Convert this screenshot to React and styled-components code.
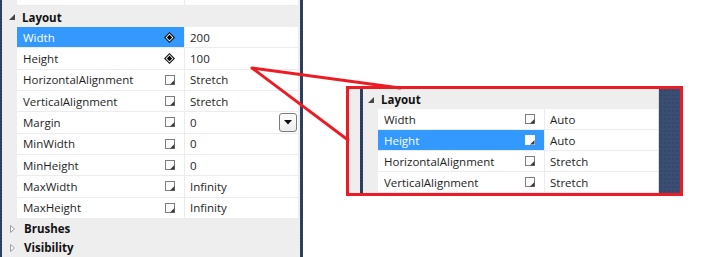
import React from 'react';
import styled, { createGlobalStyle } from 'styled-components';

const Global = createGlobalStyle`
  html, body { margin: 0; padding: 0; background: #ffffff; }
  body { font-family: "Open Sans", "Noto Sans", sans-serif; font-size: 11.5px; color: #1e1e1e; }
`;

const Page = styled.div`
  position: relative;
  width: 710px;
  height: 257px;
  overflow: hidden;
  display: flex;
  background: #ffffff;
`;

const LeftPanel = styled.div`
  display: flex;
  width: 303px;
  height: 100%;
  flex-shrink: 0;
`;

const NavyStrip = styled.div`
  width: ${p => p.$w}px;
  flex-shrink: 0;
  background-color: #2f4162;
  background-image: radial-gradient(#26344f 0.6px, transparent 0.8px);
  background-size: 3px 3px;
`;

const NavyPattern = styled.div`
  width: ${p => p.$w}px;
  flex-shrink: 0;
  background-color: #3a4e73;
  background-image: radial-gradient(#2f4060 0.6px, transparent 0.8px);
  background-size: 4px 4px;
`;

const SideGray = styled.div`
  width: ${p => p.$w}px;
  flex-shrink: 0;
  background: ${p => p.$c || '#eeeeee'};
`;

const Grid = styled.div`
  flex: 1;
  min-width: 0;
  background: #eeeeee;
  overflow: hidden;
  display: flex;
  flex-direction: column;
`;

const Scroller = styled.div`
  display: flex;
  flex-direction: column;
  margin-top: ${p => p.$offset || 0}px;
`;

const Header = styled.div`
  display: flex;
  align-items: center;
  height: ${p => p.$h}px;
  flex-shrink: 0;
  padding-left: ${p => p.$pad}px;
  padding-top: 1px;
  font-weight: 700;
  color: #111111;
  box-sizing: border-box;
`;

const Arrow = styled.svg`
  width: 6px;
  height: ${p => p.$ht || 6}px;
  margin-right: ${p => p.$gap}px;
  flex-shrink: 0;
`;

const Row = styled.div`
  display: grid;
  grid-template-columns: ${p => p.$nameW}px 1fr;
  height: ${p => p.$h}px;
  flex-shrink: 0;
  margin-left: 15px;
  margin-right: ${p => p.$mr}px;
  background: #ffffff;
  border-bottom: 1px solid #ececec;
  box-sizing: border-box;
`;

const NameCell = styled.div`
  display: flex;
  align-items: center;
  padding-left: ${p => p.$pl}px;
  padding-right: 9px;
  background: ${p => (p.$sel ? '#3399ff' : 'transparent')};
  color: ${p => (p.$sel ? '#ffffff' : '#1e1e1e')};
  border-right: 1px solid #ececec;
  min-width: 0;
`;

const Label = styled.span`
  flex: 1;
  white-space: nowrap;
  overflow: hidden;
`;

const ValueCell = styled.div`
  display: flex;
  align-items: center;
  padding-left: ${p => p.$pl}px;
  padding-right: 1px;
  color: #1e1e1e;
  min-width: 0;
`;

const Value = styled.span`
  flex: 1;
  white-space: nowrap;
`;

const DropButton = styled.div`
  width: 18px;
  height: 19px;
  box-sizing: border-box;
  border: 1px solid #7a7a7a;
  border-radius: 3px;
  background: linear-gradient(#ffffff, #ececec);
  display: flex;
  align-items: center;
  justify-content: center;
`;

const RightArea = styled.div`
  flex: 1;
  padding: 86px 0 0 43px;
`;

const Zoomed = styled.div`
  width: 337px;
  height: 110px;
  box-sizing: border-box;
  border: 3px solid #ed1c24;
  display: flex;
`;

const Overlay = styled.svg`
  position: absolute;
  left: 0;
  top: 0;
  pointer-events: none;
`;

const LocalIcon = ({ sel }) => (
  <svg width="10" height="10" viewBox="0 0 10 10">
    <rect x="0.5" y="0.5" width="9" height="9" fill={sel ? '#ffffff' : '#fafafa'} stroke={sel ? '#ffffff' : '#7d7d7d'} />
    <path d="M5 9.5 L9.5 5 L9.5 9.5 Z" fill="#3a3a3a" />
  </svg>
);

const SetIcon = () => (
  <svg width="11" height="11" viewBox="0 0 11 11">
    <path d="M5.5 0 L11 5.5 L5.5 11 L0 5.5 Z" fill="#111111" />
    <path d="M5.5 1.6 L9.4 5.5 L5.5 9.4 L1.6 5.5 Z" fill="#ffffff" />
    <path d="M5.5 2.8 L8.2 5.5 L5.5 8.2 L2.8 5.5 Z" fill="#000000" />
  </svg>
);

const Expanded = ({ gap }) => (
  <Arrow $gap={gap} viewBox="0 0 6 6">
    <path d="M6 0 L6 6 L0 6 Z" fill="#464646" />
  </Arrow>
);

const Collapsed = ({ gap }) => (
  <Arrow $gap={gap} $ht={8} viewBox="0 0 6 8">
    <path d="M0.5 0.5 L4.5 4 L0.5 7.5 Z" fill="#ffffff" stroke="#a0a0a0" strokeWidth="1" />
  </Arrow>
);

const Prop = ({ name, value, icon, sel, h, nameW, mr, drop }) => (
  <Row $h={h} $nameW={nameW} $mr={mr}>
    <NameCell $sel={sel} $pl={6}>
      <Label>{name}</Label>
      {icon === 'set' ? <SetIcon /> : <LocalIcon sel={sel} />}
    </NameCell>
    <ValueCell $pl={5}>
      <Value>{value}</Value>
      {drop && (
        <DropButton>
          <svg width="8" height="5" viewBox="0 0 8 5">
            <path d="M0 0 L8 0 L4 4.5 Z" fill="#111111" />
          </svg>
        </DropButton>
      )}
    </ValueCell>
  </Row>
);

const leftProps = [
  { name: 'Width', value: '200', icon: 'set', sel: true },
  { name: 'Height', value: '100', icon: 'set' },
  { name: 'HorizontalAlignment', value: 'Stretch' },
  { name: 'VerticalAlignment', value: 'Stretch' },
  { name: 'Margin', value: '0', drop: true },
  { name: 'MinWidth', value: '0' },
  { name: 'MinHeight', value: '0' },
  { name: 'MaxWidth', value: 'Infinity' },
  { name: 'MaxHeight', value: 'Infinity' },
];

const rightProps = [
  { name: 'Width', value: 'Auto' },
  { name: 'Height', value: 'Auto', sel: true },
  { name: 'HorizontalAlignment', value: 'Stretch' },
  { name: 'VerticalAlignment', value: 'Stretch' },
];

export default function App() {
  return (
    <>
      <Global />
      <Page>
        <LeftPanel>
          <NavyStrip $w={2} />
          <Grid>
            <Scroller $offset={-15}>
              <Prop name="TabIndex" value="" h={21} nameW={168} mr={2} />
              <Header $h={21} $pad={7}>
                <Expanded gap={7} />
                Layout
              </Header>
              {leftProps.map(p => (
                <Prop key={p.name} {...p} h={21.33} nameW={168} mr={2} />
              ))}
              <Header $h={19} $pad={8}>
                <Collapsed gap={8} />
                Brushes
              </Header>
              <Header $h={19} $pad={8}>
                <Collapsed gap={8} />
                Visibility
              </Header>
            </Scroller>
          </Grid>
          <NavyStrip $w={3} />
        </LeftPanel>
        <RightArea>
          <Zoomed>
            <SideGray $w={11} />
            <NavyStrip $w={3} />
            <Grid>
              <Header $h={20} $pad={5}>
                <Expanded gap={7} />
                Layout
              </Header>
              {rightProps.map(p => (
                <Prop key={p.name} {...p} h={21} nameW={167} mr={0} />
              ))}
            </Grid>
            <SideGray $w={1} $c="#d6d6d6" />
            <NavyPattern $w={21} />
          </Zoomed>
        </RightArea>
        <Overlay width="710" height="257" viewBox="0 0 710 257">
          <path d="M252 68 L400 88 M252 68 L348 140" stroke="#ed1c24" strokeWidth="3" fill="none" strokeLinecap="round" />
        </Overlay>
      </Page>
    </>
  );
}
